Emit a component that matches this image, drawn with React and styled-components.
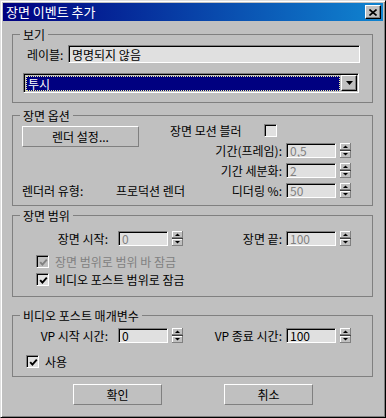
import React from 'react';
import styled, { createGlobalStyle } from 'styled-components';

const Global = createGlobalStyle`
  html, body { margin: 0; padding: 0; background: #c0c0c0; }
  body {
    font-family: "Noto Sans CJK KR", "Noto Sans", sans-serif;
    font-size: 12px;
    color: #000;
  }
  * { box-sizing: border-box; }
`;

const Window = styled.div`
  width: 386px;
  height: 418px;
  background: #c0c0c0;
  border: 1px solid;
  border-color: #dfdfdf #000 #000 #dfdfdf;
  box-shadow: inset 1px 1px #fff, inset -1px -1px #808080;
  padding: 2px;
  display: flex;
  flex-direction: column;
`;

const TitleBar = styled.div`
  height: 18px;
  flex: none;
  display: flex;
  align-items: center;
  justify-content: space-between;
  padding: 0 2px 0 3px;
  background: linear-gradient(to right, #000080, #1084d0);
  color: #fff;
  font-size: 13px;
  line-height: 18px;
`;

const CloseButton = styled.div`
  width: 16px;
  height: 14px;
  display: flex;
  align-items: center;
  justify-content: center;
  background: #c0c0c0;
  border: 1px solid;
  border-color: #fff #000 #000 #fff;
  box-shadow: inset -1px -1px #808080;
`;

const Body = styled.div`
  display: flex;
  flex-direction: column;
  padding-left: 9px;
`;

const Group = styled.fieldset`
  width: 361px;
  min-width: 0;
  margin: ${p => p.$mt}px 0 0 0;
  padding: ${p => p.$pt}px 0 ${p => p.$pb}px 0;
  border: 1px solid #808080;
`;

const Legend = styled.legend`
  margin-left: 7px;
  padding: 0 3px;
  height: 15px;
  line-height: 15px;
  font-size: 12px;
`;

const LabelRow = styled.div`
  display: flex;
  align-items: center;
  padding-left: 14px;
  height: 18px;
`;

const Text = styled.span`
  white-space: nowrap;
  line-height: 15px;
  color: ${p => (p.$disabled ? '#808080' : '#000')};
`;

const TextBox = styled.div`
  height: ${p => p.$h || 15}px;
  width: ${p => p.$w || 50}px;
  flex: none;
  margin-left: ${p => (p.$auto ? 'auto' : '0')};
  margin-right: ${p => p.$mr || 0}px;
  border: 1px solid;
  border-color: #808080 #fff #fff #808080;
  box-shadow: inset 1px 1px #000;
  background: #e0e0e0;
  padding: 0 0 0 3px;
  display: flex;
  align-items: center;
  font-size: 12px;
  line-height: 13px;
  white-space: nowrap;
  overflow: hidden;
  color: ${p => (p.$disabled ? '#808080' : '#000')};
`;

const Combo = styled.div`
  margin: 10px 0 0 10px;
  width: 336px;
  height: 20px;
  border: 1px solid;
  border-color: #808080 #fff #fff #808080;
  box-shadow: inset 1px 1px #000;
  padding: 2px 1px 1px 2px;
  display: flex;
  gap: 1px;
  background: #c0c0c0;
`;

const ComboValue = styled.div`
  flex: 1;
  background: #000080;
  border: 1px dotted #f0f0a0;
  color: #fff;
  line-height: 14px;
  padding-left: 1px;
`;

const ComboButton = styled.div`
  width: 16px;
  height: 16px;
  margin-top: -1px;
  display: flex;
  align-items: center;
  justify-content: center;
  background: #c0c0c0;
  border: 1px solid;
  border-color: #fff #000 #000 #fff;
  box-shadow: inset -1px -1px #808080;
`;

const OptionsGrid = styled.div`
  display: grid;
  grid-template-columns: 117px 1fr 50px 15px;
  grid-template-rows: repeat(4, 15px);
  row-gap: 5px;
  padding: 0 21px 0 9px;
  grid-template-areas:
    "btn blur . ."
    "btn l1 i1 s1"
    ". l2 i2 s2"
    "rt rt i3 s3";
`;

const Cell = styled.div`
  grid-area: ${p => p.$area};
  display: flex;
  align-items: center;
  justify-content: ${p => p.$justify || 'flex-start'};
  padding-right: ${p => p.$pr || 0}px;
  padding-left: ${p => p.$pl || 0}px;
  min-width: 0;
`;

const PushButton = styled.button`
  width: ${p => p.$w}px;
  height: 21px;
  margin-top: ${p => p.$mt || 0}px;
  align-self: flex-start;
  padding: 0;
  background: #c0c0c0;
  border: 1px solid;
  border-color: #fff #808080 #808080 #fff;
  font-family: inherit;
  font-size: 12px;
  color: #000;
  line-height: 15px;
`;

const SpinWrap = styled.div`
  padding-left: 4px;
  display: flex;
  align-items: center;
`;

const RangeGrid = styled.div`
  display: grid;
  grid-template-columns: 105px 50px 15px 1fr 50px 15px;
  grid-template-rows: 15px;
  padding-right: 21px;
  align-items: center;
`;

const FieldLabel = styled.div`
  display: flex;
  justify-content: flex-end;
  padding-right: ${p => p.$pr}px;
  white-space: nowrap;
  line-height: 15px;
`;

const CheckRow = styled.div`
  display: flex;
  align-items: center;
  gap: 6px;
  height: 13px;
  margin-top: ${p => p.$mt}px;
  padding-left: ${p => p.$pl}px;
`;

const CheckBox = styled.span`
  width: 13px;
  height: 13px;
  flex: none;
  border: 1px solid;
  border-color: #808080 #fff #fff #808080;
  box-shadow: inset 1px 1px #000;
  background: ${p => (p.$disabled ? '#c0c0c0' : '#e0e0e0')};
  display: flex;
  align-items: center;
  justify-content: center;
  padding: 1px 0 0 1px;
`;

const Footer = styled.div`
  display: flex;
  justify-content: center;
  gap: 62px;
  margin-top: 7px;
  padding-right: 9px;
`;

const Spinner = () => (
  <svg width="11" height="15" viewBox="0 0 11 15" shapeRendering="crispEdges">
    <rect width="11" height="15" fill="#c0c0c0" />
    <rect x="0" y="0" width="11" height="1" fill="#fff" />
    <rect x="0" y="0" width="1" height="7" fill="#fff" />
    <rect x="0" y="6" width="11" height="1" fill="#808080" />
    <rect x="10" y="0" width="1" height="7" fill="#808080" />
    <rect x="0" y="7" width="11" height="1" fill="#404040" />
    <rect x="0" y="8" width="11" height="1" fill="#fff" />
    <rect x="0" y="8" width="1" height="7" fill="#fff" />
    <rect x="0" y="14" width="11" height="1" fill="#808080" />
    <rect x="10" y="8" width="1" height="7" fill="#808080" />
    <polygon points="3,5 8,5 5.5,2.5" fill="#000" shapeRendering="auto" />
    <polygon points="3,10 8,10 5.5,12.5" fill="#000" shapeRendering="auto" />
  </svg>
);

const CheckMark = ({ color }) => (
  <svg width="9" height="9" viewBox="0 0 9 9">
    <path d="M1.2 4.2 L3.4 6.6 L7.8 1.6" fill="none" stroke={color} strokeWidth="1.9" />
  </svg>
);

const Check = ({ checked, disabled }) => (
  <CheckBox $disabled={disabled}>
    {checked && <CheckMark color={disabled ? '#808080' : '#000'} />}
  </CheckBox>
);

const SpinField = ({ area, value, disabled }) => (
  <>
    <TextBox $disabled={disabled} style={area ? { gridArea: area.i } : undefined}>{value}</TextBox>
    <SpinWrap style={area ? { gridArea: area.s } : undefined}>
      <Spinner />
    </SpinWrap>
  </>
);

export default function App() {
  return (
    <>
      <Global />
      <Window>
        <TitleBar>
          <span>장면 이벤트 추가</span>
          <CloseButton>
            <svg width="8" height="7" viewBox="0 0 8 7">
              <path d="M0.5 0.5 L7.5 6.5 M7.5 0.5 L0.5 6.5" stroke="#000" strokeWidth="1.6" />
            </svg>
          </CloseButton>
        </TitleBar>
        <Body>
          <Group $mt={6} $pt={3} $pb={9}>
            <Legend>보기</Legend>
            <LabelRow>
              <Text>레이블:</Text>
              <TextBox $w={292} $h={18} $auto $mr={12}>명명되지 않음</TextBox>
            </LabelRow>
            <Combo>
              <ComboValue>투시</ComboValue>
              <ComboButton>
                <svg width="7" height="4" viewBox="0 0 7 4">
                  <polygon points="0,0 7,0 3.5,4" fill="#000" />
                </svg>
              </ComboButton>
            </Combo>
          </Group>

          <Group $mt={5} $pt={0} $pb={7}>
            <Legend>장면 옵션</Legend>
            <OptionsGrid>
              <Cell $area="btn">
                <PushButton $w={117} $mt={3}>렌더 설정...</PushButton>
              </Cell>
              <Cell $area="blur" $pl={31}>
                <Text>장면 모션 블러</Text>
                <span style={{ marginLeft: 'auto', marginRight: 9 }}>
                  <Check />
                </span>
              </Cell>
              <Cell $area="l1" $justify="flex-end" $pr={4}><Text>기간(프레임):</Text></Cell>
              <SpinField area={{ i: 'i1', s: 's1' }} value="0,5" disabled />
              <Cell $area="l2" $justify="flex-end" $pr={4}><Text>기간 세분화:</Text></Cell>
              <SpinField area={{ i: 'i2', s: 's2' }} value="2" disabled />
              <Cell $area="rt" $pr={4}>
                <Text style={{ width: 94 }}>렌더러 유형:</Text>
                <Text>프로덕션 렌더</Text>
                <Text style={{ marginLeft: 'auto' }}>디더링 %:</Text>
              </Cell>
              <SpinField area={{ i: 'i3', s: 's3' }} value="50" disabled />
            </OptionsGrid>
          </Group>

          <Group $mt={2} $pt={8} $pb={10}>
            <Legend>장면 범위</Legend>
            <RangeGrid>
              <FieldLabel $pr={10}>장면 시작:</FieldLabel>
              <SpinField value="0" disabled />
              <FieldLabel $pr={4}>장면 끝:</FieldLabel>
              <SpinField value="100" disabled />
            </RangeGrid>
            <CheckRow $mt={9} $pl={23}>
              <Check checked disabled />
              <Text $disabled>장면 범위로 범위 바 잠금</Text>
            </CheckRow>
            <CheckRow $mt={5} $pl={23}>
              <Check checked />
              <Text>비디오 포스트 범위로 잠금</Text>
            </CheckRow>
          </Group>

          <Group $mt={11} $pt={5} $pb={8}>
            <Legend>비디오 포스트 매개변수</Legend>
            <RangeGrid>
              <FieldLabel $pr={10}>VP 시작 시간:</FieldLabel>
              <SpinField value="0" />
              <FieldLabel $pr={4}>VP 종료 시간:</FieldLabel>
              <SpinField value="100" />
            </RangeGrid>
            <CheckRow $mt={12} $pl={13}>
              <Check checked />
              <Text>사용</Text>
            </CheckRow>
          </Group>

          <Footer>
            <PushButton $w={89}>확인</PushButton>
            <PushButton $w={89}>취소</PushButton>
          </Footer>
        </Body>
      </Window>
    </>
  );
}
